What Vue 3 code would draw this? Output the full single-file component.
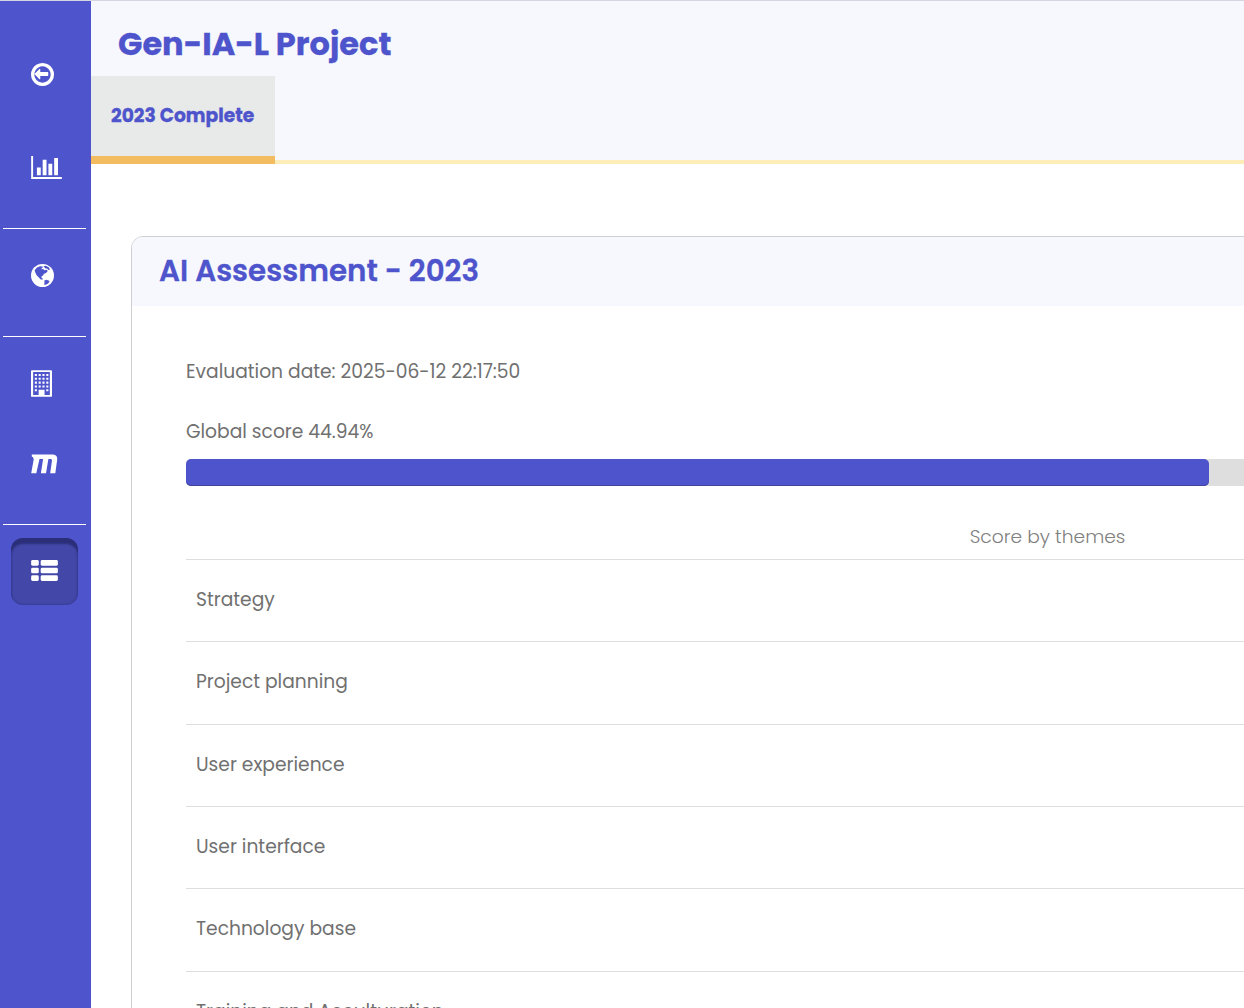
<template>
  <div class="app">
    <aside class="sidebar">
      <nav v-for="(group, i) in menu" :key="i" class="group">
        <a
          v-for="item in group"
          :key="item"
          href="#"
          class="item"
          :class="[item, { active: item === current }]"
          @click.prevent="current = item"
        >
          <svg v-if="item === 'back'" width="23" height="23" viewBox="128 128 1536 1536">
            <path d="M1280 832v128q0 14-9 23t-23 9h-502v192q0 14-9 23t-23 9q-12 0-24-10l-319-319q-9-9-9-23t9-23l320-320q9-9 23-9 13 0 22.5 9.5t9.5 22.5v192h502q14 0 23 9t9 23zm160 64q0-148-73-273t-198-198-273-73-273 73-198 198-73 273 73 273 198 198 273 73 273-73 198-198 73-273zm224 0q0 209-103 385.5t-279.5 279.5-385.5 103-385.5-103-279.5-279.5-103-385.5 103-385.5 279.5-279.5 385.5-103 385.5 103 279.5 279.5 103 385.5z" />
          </svg>
          <svg v-else-if="item === 'stats'" width="31" height="23" viewBox="0 128 2048 1536">
            <path d="M640 896v512h-256v-512h256zm384-512v1024h-256v-1024h256zm1024 1152v128h-2048v-1536h128v1408h1920zm-640-896v768h-256v-768h256zm384-384v1152h-256v-1152h256z" />
          </svg>
          <svg v-else-if="item === 'world'" width="23" height="23" viewBox="0 0 23 23">
            <circle cx="11.5" cy="11.5" r="11.5" />
            <path class="cut" d="M3.600 6.300 6 3.600l3-1.300 2.500.2.300 1-1.300.9.200.9 1.700-.3 1 1.200 2.200-.4 1.200 1.200-1.800 2-2 .8-1 1.800-1.600 1 .2 1.500 1.200.4-.4 1.200-2-.5-2-2.200-1.800-1.800-1.200-2.400z" />
            <path class="cut" d="M12.500 2.300l2.400-.5 2.800 1.500 1.300 2.200-1.600.5-1.400-1.600-1.600.2zM13.200 16.800l2-1 2.400.6 1 .8-1.400 2.300-2.600 1.300-1.800-.4.800-1.500z" />
          </svg>
          <svg v-else-if="item === 'company'" width="21" height="27" viewBox="0 0 1408 1792">
            <path fill-rule="evenodd" d="M64 0h1280q64 0 64 64v1664q0 64-64 64H64q-64 0-64-64V64Q0 0 64 0zM144 128v1536h1120V128z" />
            <path d="M256 256h140v140H256zM512 256h140v140H512zM768 256h140v140H768zM1024 256h140v140h-140zM256 512h140v140H256zM512 512h140v140H512zM768 512h140v140H768zM1024 512h140v140h-140zM256 768h140v140H256zM512 768h140v140H512zM768 768h140v140H768zM1024 768h140v140h-140zM256 1024h140v140H256zM512 1024h140v140H512zM768 1024h140v140H768zM1024 1024h140v140h-140zM256 1280h140v140H256zM1024 1280h140v140h-140zM512 1310h396v354H512z" />
          </svg>
          <svg v-else-if="item === 'models'" width="27" height="20" viewBox="0 0 27 20">
            <path d="M.8.500H22q4.700.3 4.200 5L24.300 19.300h-5.100L21 6.500q.1-1.500-1.200-1.600h-2.400L15 19.300H9.900l2.200-14.400H8.500L5.300 19.300H.2L2.700 5.500Q2.700 3.200.8 2.500z" />
          </svg>
          <svg v-else width="27" height="21" viewBox="0 128 1792 1408">
            <rect v-for="y in [128, 640, 1152]" :key="'a' + y" x="0" :y="y" width="512" height="384" rx="96" />
            <rect v-for="y in [128, 640, 1152]" :key="'b' + y" x="640" :y="y" width="1152" height="384" rx="96" />
          </svg>
        </a>
      </nav>
    </aside>

    <main class="main">
      <header class="header">
        <h1>Gen-IA-L Project</h1>
        <div class="tabs">
          <a href="#" class="tab" @click.prevent>2023 Complete</a>
        </div>
      </header>

      <section class="card">
        <h2>AI Assessment - 2023</h2>
        <div class="card-body">
          <p class="date">Evaluation date: 2025-06-12 22:17:50</p>
          <p class="score">Global score {{ score }}%</p>
          <div class="progress">
            <div class="progress-bar" :style="{ width: score + '%' }"></div>
          </div>
          <div class="caption">Score by themes</div>
          <div v-for="theme in themes" :key="theme" class="theme">{{ theme }}</div>
        </div>
      </section>
    </main>
  </div>
</template>

<script setup>
import { ref } from "vue";

const menu = [["back", "stats"], ["world"], ["company", "models"], ["list"]];
const current = ref("list");

const score = ref(44.94);

const themes = [
  "Strategy",
  "Project planning",
  "User experience",
  "User interface",
  "Technology base",
  "Training and Acculturation",
];
</script>

<style>
body {
  margin: 0;
  overflow: hidden;
}
</style>

<style scoped>
.app {
  display: flex;
  box-sizing: border-box;
  height: 1008px;
  overflow: hidden;
  border-top: 1px solid #d5d6e2;
  background: #fff;
  color: #707070;
  font-family: Poppins, Inter, sans-serif;
  font-size: 18.67px;
}

.sidebar {
  flex: none;
  box-sizing: border-box;
  width: 91px;
  padding: 33px 5px 0 3px;
  background: #4e54cb;
}

.group + .group {
  border-top: 1px solid #fff;
}

.item {
  display: flex;
  align-items: center;
  box-sizing: border-box;
  height: 80px;
  padding-left: 28px;
}

.item svg {
  display: block;
  fill: #fff;
}

.item .cut {
  fill: #4e54cb;
}

.stats {
  height: 107px;
  margin-bottom: 7px;
}

.world {
  height: 93px;
  margin-bottom: 14px;
}

.company {
  height: 93px;
}

.models {
  height: 67px;
  margin-bottom: 27px;
}

.active {
  width: 67px;
  height: 67px;
  margin: 13px 0 0 8px;
  padding: 0 0 2px 20px;
  border-radius: 12px;
  background: #4348a8;
  box-shadow: inset 0 6px 2px #2b2f79, inset 0 0 3px #30348a;
}

.main {
  flex: 1;
  min-width: 0;
  overflow: hidden;
}

.header {
  box-sizing: border-box;
  height: 163px;
  border-bottom: 4px solid #feecb9;
  background: #f7f8fd;
}

h1 {
  box-sizing: border-box;
  height: 75px;
  margin: 0;
  padding: 23px 0 0 27px;
  color: #4e54cb;
  font-size: 32px;
  font-weight: 700;
  line-height: 40px;
}

h1,
h2,
.tab {
  -webkit-text-stroke: 0.3px #4e54cb;
}

.tabs {
  display: flex;
}

.tab {
  box-sizing: border-box;
  width: 184px;
  height: 88px;
  padding-left: 20px;
  border-bottom: 8px solid #f3bc60;
  background: #e8eae9;
  color: #4e54cb;
  font-weight: 700;
  line-height: 79px;
  text-decoration: none;
  white-space: nowrap;
}

.card {
  box-sizing: border-box;
  width: 1833px;
  margin: 72px 0 0 40px;
  border: 1px solid #ced0d2;
  border-radius: 12px;
  overflow: hidden;
}

h2 {
  height: 69px;
  margin: 0;
  padding-left: 27px;
  background: #f7f8fd;
  color: #4e54cb;
  font-size: 29.33px;
  font-weight: 600;
  line-height: 67px;
}

.card-body {
  padding: 51px 54px;
}

p {
  margin: 0;
  line-height: 30px;
}

.score {
  margin-top: 30px;
}

.progress {
  width: 2276px;
  height: 27px;
  margin-top: 12px;
  border-radius: 5px;
  background: #dedede;
}

.progress-bar {
  height: 100%;
  border-radius: 5px;
  background: #4e54cb;
  box-shadow: inset 0 -1px 0 #41459f;
}

.caption {
  height: 42.8px;
  margin-top: 30px;
  color: #808080;
  font-weight: 300;
  line-height: 41px;
  text-align: center;
}

.theme {
  box-sizing: border-box;
  height: 82.4px;
  padding: 0 10px;
  border-top: 1px solid #dedede;
  line-height: 80px;
}
</style>
